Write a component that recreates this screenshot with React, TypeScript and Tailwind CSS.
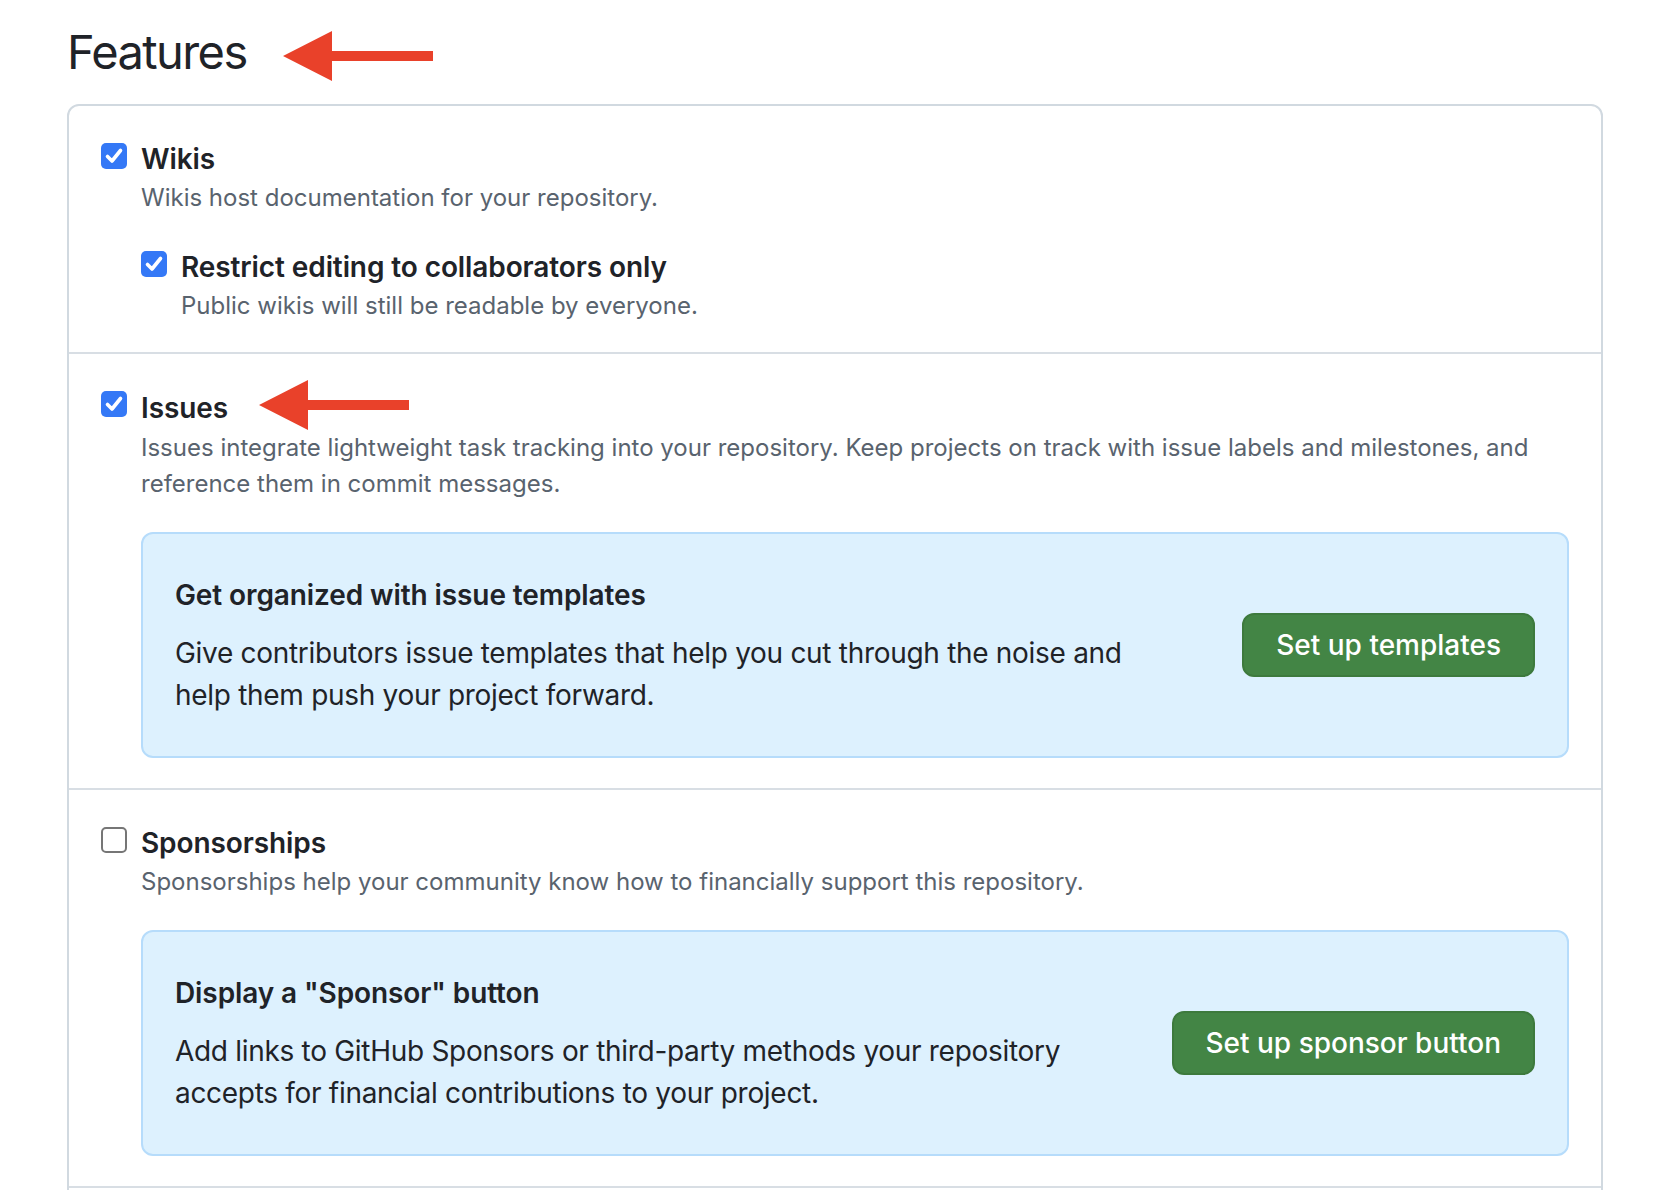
import React from "react";

const FONT = { fontFamily: "Inter, 'Noto Sans', 'Liberation Sans', sans-serif" };

function Checkbox({ checked }: { checked: boolean }) {
  if (checked) {
    return (
      <span className="mt-[5px] flex h-[26px] w-[26px] shrink-0 items-center justify-center rounded-[5px] bg-[#3478f6]">
        <svg width="26" height="26" viewBox="0 0 26 26" fill="none">
          <path d="M6.5 13.5 L11 18 L19.5 7.5" stroke="white" strokeWidth="3.6" strokeLinecap="round" strokeLinejoin="round" />
        </svg>
      </span>
    );
  }
  return <span className="mt-[5px] h-[26px] w-[26px] shrink-0 rounded-[5px] border-2 border-[#767676] bg-white" />;
}

function Arrow({ className }: { className?: string }) {
  return (
    <svg className={className} width="150" height="50" viewBox="0 0 150 50">
      <polygon points="0,25 49,0 49,20 150,20 150,30 49,30 49,50" fill="#e9412a" />
    </svg>
  );
}

type OptionProps = {
  label: string;
  note: string;
  checked: boolean;
  arrow?: boolean;
  children?: React.ReactNode;
};

function Option({ label, note, checked, arrow, children }: OptionProps) {
  return (
    <div className="flex gap-[14px]">
      <Checkbox checked={checked} />
      <div className="flex-1">
        <div className="flex items-center">
          <span className="text-[28px] font-semibold leading-[42px] tracking-[-0.1px] text-[#1f2328]">{label}</span>
          {arrow && <Arrow className="ml-[31px] mt-[-6px]" />}
        </div>
        <p className="text-[24px] leading-[36px] text-[#59636e]">{note}</p>
        {children}
      </div>
    </div>
  );
}

function Promo({ title, text, button }: { title: string; text: string; button: string }) {
  return (
    <div className="mt-[30px] flex items-center justify-between rounded-[12px] border-2 border-[#b6dcfb] bg-[#ddf1fe] px-8 py-10">
      <div className="w-[975px]">
        <h3 className="mb-4 text-[28px] font-semibold leading-[42px] tracking-[-0.1px] text-[#1f2328]">{title}</h3>
        <p className="text-[28px] leading-[42px] tracking-[-0.3px] text-[#1f2328]">{text}</p>
      </div>
      <button className="rounded-[12px] border-2 border-[#3d7a3d] bg-[#438545] px-8 py-[10px] text-[28px] font-medium leading-[40px] text-white">
        {button}
      </button>
    </div>
  );
}

export default function App() {
  return (
    <div className="h-[1190px] overflow-hidden bg-white" style={FONT}>
      <div className="ml-[67px] w-[1536px] pt-[16px]">
        <div className="mb-4 flex items-center">
          <h2 className="text-[47px] font-normal leading-[72px] tracking-[-1.6px] text-[#1f2328]">Features</h2>
          <Arrow className="ml-[36px] mt-[8px]" />
        </div>
        <div className="rounded-[12px] border-2 border-[#d1d9e0]">
          <div className="border-b-2 border-[#d8dee4] px-8 pt-8 pb-[28px]">
            <Option label="Wikis" note="Wikis host documentation for your repository." checked>
              <div className="mt-[30px]">
                <Option label="Restrict editing to collaborators only" note="Public wikis will still be readable by everyone." checked />
              </div>
            </Option>
          </div>
          <div className="border-b-2 border-[#d8dee4] px-8 pt-8 pb-[30px]">
            <Option
              label="Issues"
              note="Issues integrate lightweight task tracking into your repository. Keep projects on track with issue labels and milestones, and reference them in commit messages."
              checked
              arrow
            >
              <Promo
                title="Get organized with issue templates"
                text="Give contributors issue templates that help you cut through the noise and help them push your project forward."
                button="Set up templates"
              />
            </Option>
          </div>
          <div className="border-b-2 border-[#d8dee4] px-8 pt-8 pb-[30px]">
            <Option
              label="Sponsorships"
              note="Sponsorships help your community know how to financially support this repository."
              checked={false}
            >
              <Promo
                title={'Display a "Sponsor" button'}
                text="Add links to GitHub Sponsors or third-party methods your repository accepts for financial contributions to your project."
                button="Set up sponsor button"
              />
            </Option>
          </div>
          <div className="h-[160px]" />
        </div>
      </div>
    </div>
  );
}
